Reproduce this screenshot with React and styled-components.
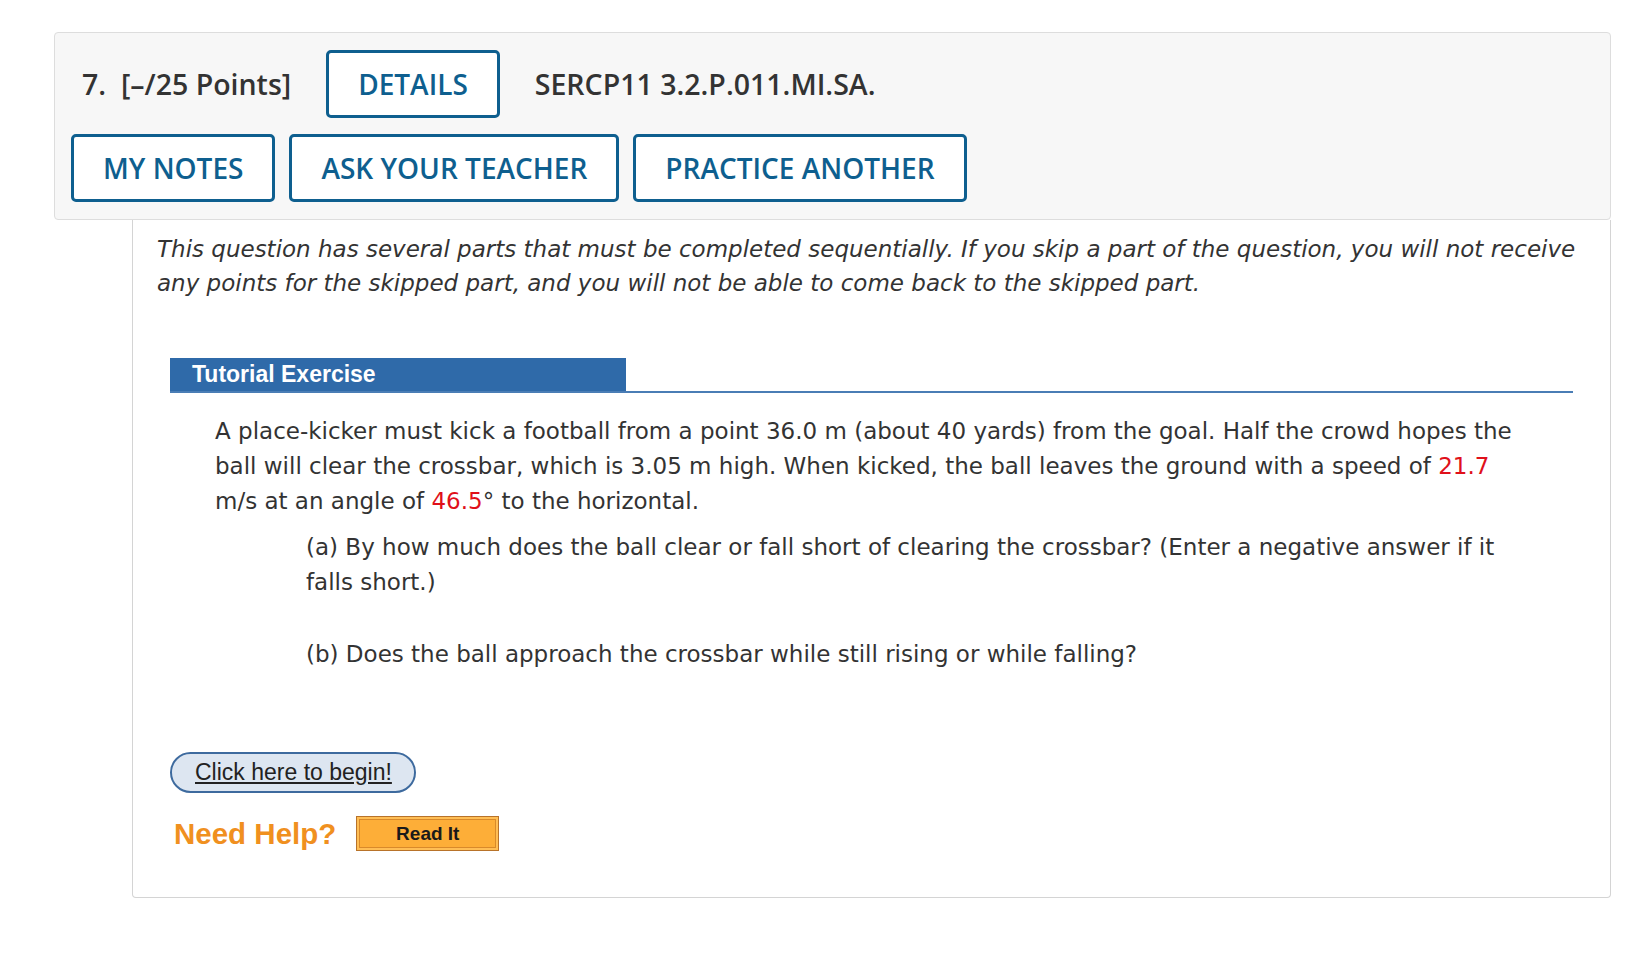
import React from "react";
import styled, { createGlobalStyle } from "styled-components";

const GlobalStyle = createGlobalStyle`
  html, body {
    margin: 0;
    padding: 0;
    background: #ffffff;
  }
`;

const Page = styled.div`
  padding: 32px 29px 40px 54px;
`;

const Header = styled.div`
  background-color: #f7f7f7;
  border: 1px solid #dddddd;
  border-radius: 4px;
  padding: 17px 16px 17px 16px;
  font-family: "Open Sans", "Liberation Sans", sans-serif;
`;

const TopRow = styled.div`
  display: flex;
  align-items: center;
  gap: 35px;
  padding-left: 11px;
`;

const ButtonRow = styled.div`
  display: flex;
  gap: 14px;
  margin-top: 16px;
`;

const Label = styled.span`
  font-size: 28.5px;
  font-weight: 600;
  color: #333333;
  white-space: pre;
`;

const HeaderButton = styled.button`
  height: 68px;
  padding: 0 29px;
  border: 3px solid #0e5f8f;
  border-radius: 5px;
  background: #ffffff;
  color: #0e5f8f;
  font-family: "Open Sans", "Liberation Sans", sans-serif;
  font-size: 28px;
  font-weight: 600;
  cursor: pointer;
`;

const Content = styled.div`
  margin-left: 78px;
  border: 1px solid #d4d4d4;
  border-top: none;
  border-radius: 0 0 4px 4px;
  padding: 12px 0 46px 0;
  font-family: Verdana, "DejaVu Sans", sans-serif;
  color: #333333;
`;

const Intro = styled.p`
  margin: 0 24px;
  font-size: 23px;
  line-height: 34px;
  font-style: italic;
`;

const Tutorial = styled.div`
  margin: 58px 37px 0 37px;
`;

const TutorialHead = styled.div`
  border-bottom: 2px solid #4a7db5;
`;

const TutorialTitle = styled.div`
  width: 456px;
  height: 33px;
  box-sizing: border-box;
  padding-left: 22px;
  background-color: #2f6aa9;
  color: #ffffff;
  font-family: "Liberation Sans", Arial, sans-serif;
  font-weight: 700;
  font-size: 23px;
  line-height: 33px;
`;

const Problem = styled.p`
  margin: 21px 45px 0 45px;
  font-size: 23px;
  line-height: 35px;
`;

const Part = styled.p`
  margin: ${({ $top }) => $top}px 45px 0 136px;
  font-size: 23px;
  line-height: 35px;
`;

const Red = styled.span`
  color: #e0101a;
`;

const Actions = styled.div`
  margin: 80px 0 0 37px;
  display: flex;
  flex-direction: column;
  align-items: flex-start;
  gap: 23px;
`;

const BeginButton = styled.a`
  display: inline-block;
  height: 41px;
  box-sizing: border-box;
  padding: 0 22px 0 23px;
  border: 2px solid #3d6a9e;
  border-radius: 21px;
  background-color: #dde6f1;
  color: #222222;
  font-family: "Liberation Sans", Arial, sans-serif;
  font-size: 23px;
  line-height: 37px;
  text-decoration: underline;
  cursor: pointer;
`;

const HelpRow = styled.div`
  display: flex;
  align-items: center;
  gap: 20px;
  padding-left: 4px;
`;

const NeedHelp = styled.span`
  font-family: "Liberation Sans", Arial, sans-serif;
  font-weight: 700;
  font-size: 29.5px;
  color: #f0901f;
`;

const ReadIt = styled.button`
  width: 143px;
  height: 35px;
  border: 1px solid #b8732a;
  background-color: #fdae38;
  box-shadow: inset 0 0 0 2px #ffbe55, inset 0 0 0 3px #d98a2a;
  color: #1a1a1a;
  font-family: "Liberation Sans", Arial, sans-serif;
  font-weight: 700;
  font-size: 19px;
  cursor: pointer;
`;

export default function App() {
  return (
    <Page>
      <GlobalStyle />
      <Header>
        <TopRow>
          <Label>{"7.  [–/25 Points]"}</Label>
          <HeaderButton>DETAILS</HeaderButton>
          <Label>SERCP11 3.2.P.011.MI.SA.</Label>
        </TopRow>
        <ButtonRow>
          <HeaderButton>MY NOTES</HeaderButton>
          <HeaderButton>ASK YOUR TEACHER</HeaderButton>
          <HeaderButton>PRACTICE ANOTHER</HeaderButton>
        </ButtonRow>
      </Header>
      <Content>
        <Intro>
          This question has several parts that must be completed sequentially. If you skip a part of the
          question, you will not receive any points for the skipped part, and you will not be able to come
          back to the skipped part.
        </Intro>
        <Tutorial>
          <TutorialHead>
            <TutorialTitle>Tutorial Exercise</TutorialTitle>
          </TutorialHead>
          <Problem>
            A place-kicker must kick a football from a point 36.0 m (about 40 yards) from the goal. Half the
            crowd hopes the ball will clear the crossbar, which is 3.05 m high. When kicked, the ball leaves
            the ground with a speed of <Red>21.7</Red> m/s at an angle of <Red>46.5</Red>° to the horizontal.
          </Problem>
          <Part $top={11}>
            (a) By how much does the ball clear or fall short of clearing the crossbar? (Enter a negative
            answer if it falls short.)
          </Part>
          <Part $top={37}>(b) Does the ball approach the crossbar while still rising or while falling?</Part>
        </Tutorial>
        <Actions>
          <BeginButton>Click here to begin!</BeginButton>
          <HelpRow>
            <NeedHelp>Need Help?</NeedHelp>
            <ReadIt>Read It</ReadIt>
          </HelpRow>
        </Actions>
      </Content>
    </Page>
  );
}
